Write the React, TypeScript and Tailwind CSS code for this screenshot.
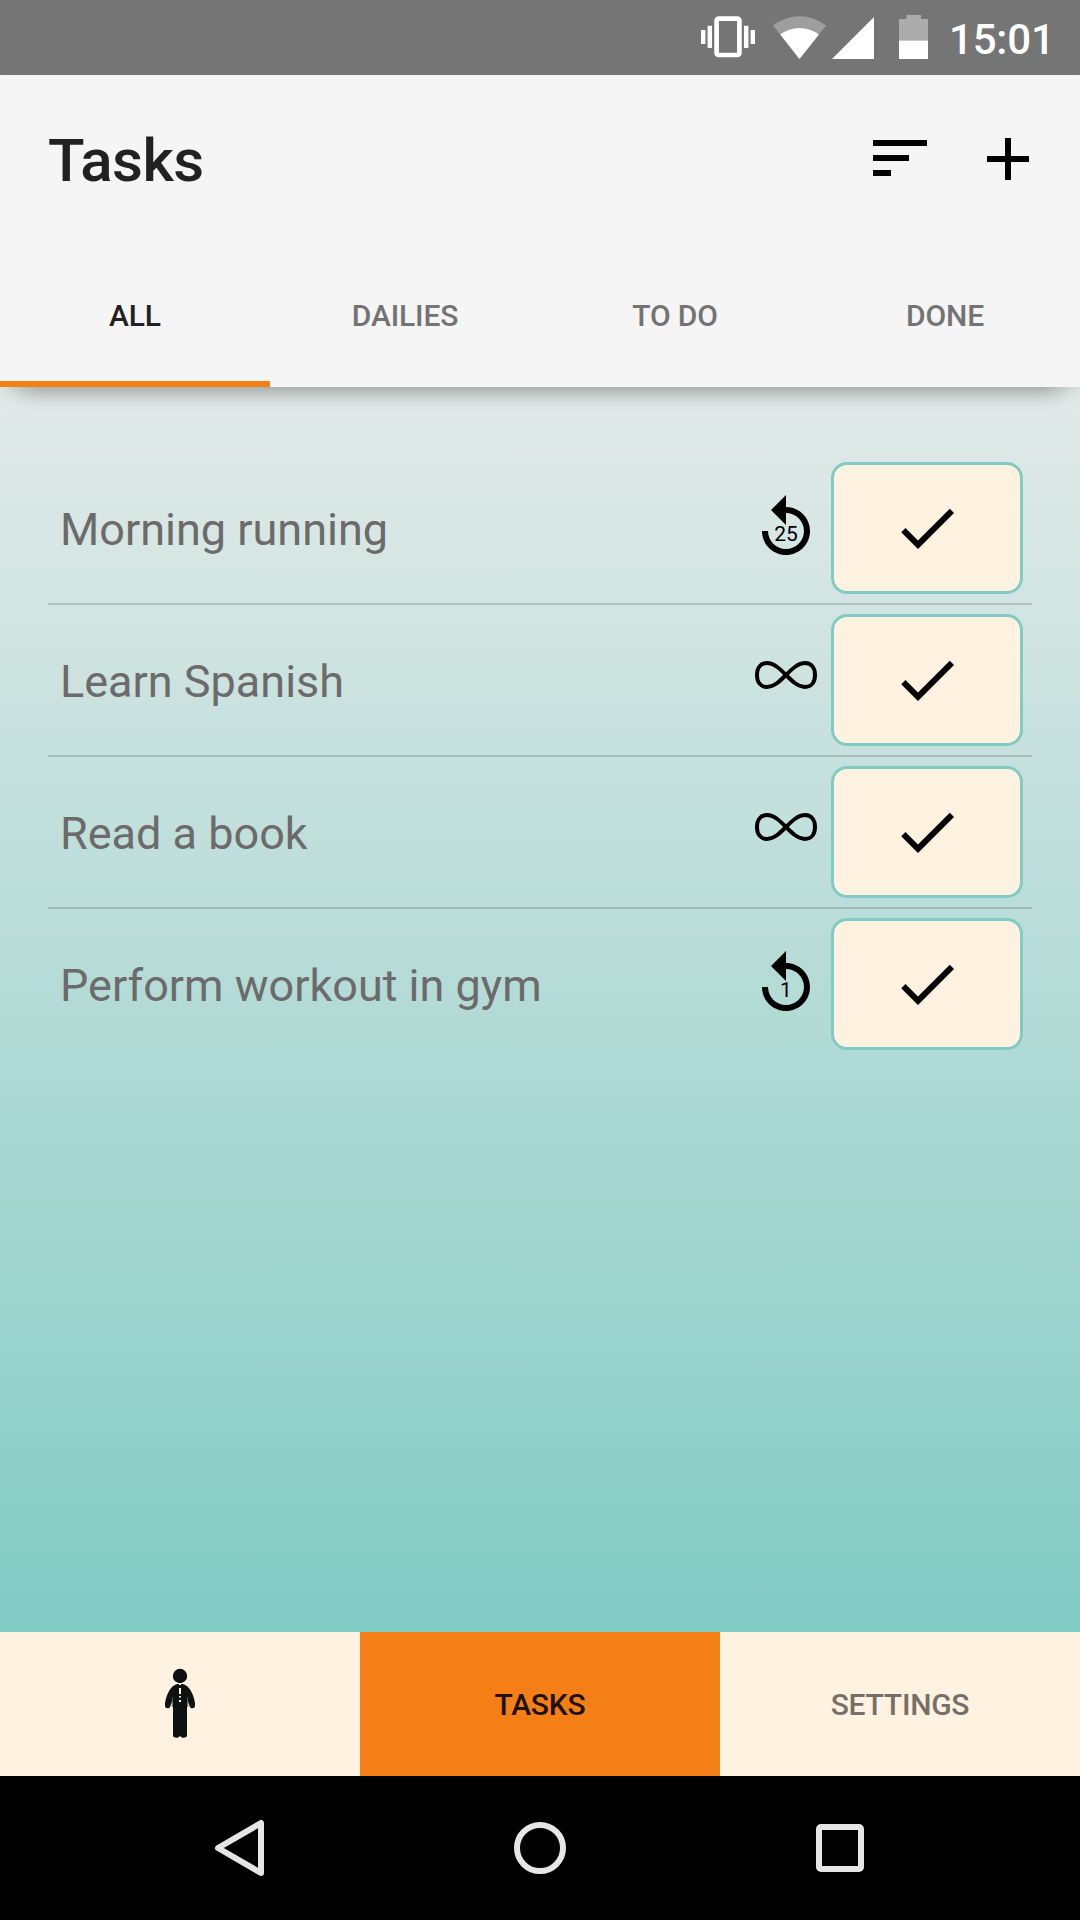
import { useState } from "react";
import clsx from "clsx";

interface Task {
  id: number;
  title: string;
  // null means the task repeats forever
  repeats: number | null;
}

const TASKS: Task[] = [
  { id: 1, title: "Morning running", repeats: 25 },
  { id: 2, title: "Learn Spanish", repeats: null },
  { id: 3, title: "Read a book", repeats: null },
  { id: 4, title: "Perform workout in gym", repeats: 1 },
];

const TABS = ["ALL", "DAILIES", "TO DO", "DONE"];

function StatusBar() {
  return (
    <div className="flex h-[75px] shrink-0 items-start justify-end bg-[#757575] pr-6 text-white">
      <svg width="54" height="75" viewBox="701 0 54 75" fill="currentColor">
        <path d="M701 30h4.4v14H701zM707.6 25.7h4.4V48h-4.4zM744 25.7h4.4V48H744zM750.6 30h4.4v14h-4.4z" />
        <rect x="716.6" y="18.6" width="22.8" height="36.4" rx="2" fill="none" stroke="currentColor" strokeWidth="4.7" />
      </svg>
      <svg className="ml-[18px]" width="53" height="75" viewBox="773 0 53 75" fill="currentColor">
        <path opacity="0.3" d="M799.5 59L773 25.5a43 43 0 0 1 53 0z" />
        <path d="M799.5 59L780.3 34.5a31.5 31.5 0 0 1 38.6 0z" />
      </svg>
      <svg className="ml-[6px]" width="42" height="75" viewBox="832 0 42 75" fill="currentColor">
        <path d="M832 59L874 17v42z" />
      </svg>
      <svg className="ml-[25px]" width="29" height="75" viewBox="899 0 29 75" fill="currentColor">
        <path opacity="0.4" d="M899 19h7.5v-4H921v4h7v21.5h-29z" />
        <path d="M899 40.5h29V59h-29z" />
      </svg>
      <span className="ml-[21px] w-[107px] pt-[15px] text-[42px] leading-[50px] font-medium tracking-[-0.2px]">
        15:01
      </span>
    </div>
  );
}

function RepeatIcon({ count }: { count: number }) {
  return (
    <div className="relative size-[72px]">
      <svg className="size-full" viewBox="0 0 24 24">
        <path d="M12 5V1L7 6l5 5V7c3.31 0 6 2.69 6 6s-2.69 6-6 6-6-2.69-6-6H4c0 4.42 3.58 8 8 8s8-3.58 8-8-3.58-8-8-8z" />
      </svg>
      <span className="absolute inset-x-0 top-[30px] text-center text-[21px] leading-[25px] text-black">
        {count}
      </span>
    </div>
  );
}

function InfinityIcon() {
  return (
    <svg className="size-[72px]" viewBox="0 0 72 72" fill="none" stroke="#000" strokeWidth="4">
      <path d="M36 31C30 25 24 19 17 19C10.500 19 7 24 7 31C7 38 10.500 43 17 43C24 43 30 37 36 31C42 25 48 19 55 19C61.500 19 65 24 65 31C65 38 61.500 43 55 43C48 43 42 37 36 31Z" />
    </svg>
  );
}

function TaskRow({ task, onDone }: { task: Task; onDone: () => void }) {
  return (
    <li className="box-content flex h-[150px] items-center pr-[9px] pl-3">
      <span className="flex-1 pt-1 text-[45px] leading-[54px] text-[#6c6a6a]">{task.title}</span>
      {task.repeats === null ? <InfinityIcon /> : <RepeatIcon count={task.repeats} />}
      <button
        type="button"
        onClick={onDone}
        className="ml-[9px] flex h-[132px] w-[192px] items-center justify-center rounded-2xl border-3 border-[#80cbc4] bg-[#fff2e0]"
      >
        <svg className="size-[72px]" viewBox="0 0 24 24">
          <path d="M9 16.17L4.83 12l-1.42 1.41L9 19 21 7l-1.410-1.410z" />
        </svg>
      </button>
    </li>
  );
}

function PersonIcon() {
  return (
    <svg width="30" height="72" viewBox="0 0 30 72" fill="#0d1110">
      <circle cx="15" cy="8" r="7.200" />
      <path d="M12 16h6c6 2 10 8 12 19v3c0 2.500-4 3-5 1l-3-8v36.500c0 2.500-5.500 3-6 1h-2c-.5 2-6 1.500-6-1V31l-3 8c-1 2-5 1.500-5-1v-3C2 24 6 18 12 16z" />
      <path d="M14 16h2v1h-2zM14 20h2v6h-2zM14 28h2v1.500h-2zM14 32h2v2h-2z" fill="#fff2e0" />
      <path d="M7.300 29v10M22.700 29v10" stroke="#5a5752" strokeWidth="1" />
    </svg>
  );
}

function SystemNav() {
  return (
    <div className="flex h-36 shrink-0 items-center justify-center bg-black">
      <div className="flex w-[300px] justify-center">
        <svg width="60" height="60" viewBox="0 0 60 60" fill="none" stroke="#e6e6e6" strokeWidth="6" strokeLinejoin="round">
          <path d="M8 30L51 5v50z" />
        </svg>
      </div>
      <div className="flex w-[300px] justify-center">
        <div className="size-[52px] rounded-full border-6 border-[#e6e6e6]" />
      </div>
      <div className="flex w-[300px] justify-center">
        <div className="size-12 rounded-[5px] border-6 border-[#e6e6e6]" />
      </div>
    </div>
  );
}

export default function App() {
  const [activeTab, setActiveTab] = useState("ALL");
  const [done, setDone] = useState<number[]>([]);

  const visibleTasks = TASKS.filter((task) =>
    activeTab === "DONE" ? done.includes(task.id) : !done.includes(task.id)
  );

  return (
    <div className="flex h-[1920px] w-[1080px] flex-col overflow-hidden font-['Roboto',sans-serif]">
      <StatusBar />

      {/* Header */}
      <header className="z-10 shrink-0 bg-[#f5f5f5] shadow-[0_28px_20px_-22px_rgba(0,0,0,0.24),0_8px_14px_-4px_rgba(0,0,0,0.12)]">
        <div className="flex h-[168px] items-center pr-9 pl-12">
          <h1 className="flex-1 pt-1 text-[60px] leading-[70px] font-medium tracking-[-0.5px] text-[#212121]">
            Tasks
          </h1>
          <button type="button" aria-label="Sort" className="mb-[2px]">
            <svg className="size-[72px]" viewBox="0 0 24 24">
              <path d="M3 18h6v-2H3v2zM3 6v2h18V6H3zm0 7h12v-2H3v2z" />
            </svg>
          </button>
          <button type="button" aria-label="Add task" className="ml-9">
            <svg className="size-[72px]" viewBox="0 0 24 24">
              <path d="M19 13h-6v6h-2v-6H5v-2h6V5h2v6h6v2z" />
            </svg>
          </button>
        </div>
        <nav className="grid h-36 grid-cols-4">
          {TABS.map((tab) => (
            <button
              key={tab}
              type="button"
              onClick={() => setActiveTab(tab)}
              className={clsx(
                "border-y-6 border-t-transparent pt-[2px] text-[30px] leading-9 font-medium tracking-[-0.15px]",
                tab === activeTab
                  ? "border-b-[#f57f17] text-[#212121]"
                  : "border-b-transparent text-[#737373]"
              )}
            >
              {tab}
            </button>
          ))}
        </nav>
      </header>

      {/* Task list */}
      <main className="flex-1 bg-linear-to-b from-[#e2eae8] to-[#80cbc4] px-12 pt-[66px]">
        <ul className="divide-y-2 divide-black/15">
          {visibleTasks.map((task) => (
            <TaskRow key={task.id} task={task} onDone={() => setDone([...done, task.id])} />
          ))}
        </ul>
      </main>

      {/* Bottom navigation */}
      <nav className="grid h-36 shrink-0 grid-cols-3 bg-[#fff2e0] text-[30px] font-medium tracking-[-0.25px]">
        <div className="flex items-center justify-center">
          <PersonIcon />
        </div>
        <div className="flex items-center justify-center bg-[#f57f17] text-[#201203]">TASKS</div>
        <div className="flex items-center justify-center text-[#766f67]">SETTINGS</div>
      </nav>

      <SystemNav />
    </div>
  );
}
